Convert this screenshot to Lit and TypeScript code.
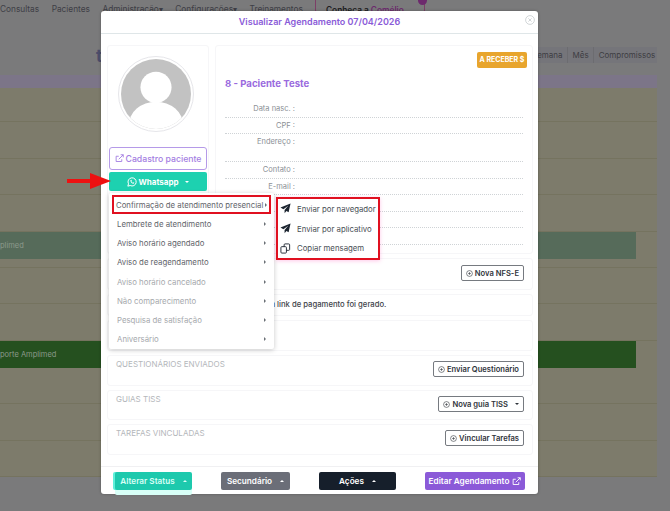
import { LitElement, html, css } from "lit";
import { customElement } from "lit/decorators.js";

const plus = html`<svg class="pi" viewBox="0 0 12 12"><circle cx="6" cy="6" r="5" fill="none" stroke="currentColor" stroke-width="1"/><path d="M6 3.6v4.8M3.6 6h4.8" stroke="currentColor" stroke-width="1"/></svg>`;
const plane = html`<svg class="mi" viewBox="0 0 12 12"><path d="M11.5.5 0.5 5l3.2 1.7 5.3-3.6-4 4.5v3.6l2-2.4 2.4 1.3z" fill="#1c2530"/></svg>`;
const copy = html`<svg class="mi" viewBox="0 0 12 12" fill="#fff" stroke="#1c2530" stroke-width="1"><rect x="4.5" y="1" width="6" height="7" rx="1"/><rect x="1" y="4" width="6" height="7" rx="1"/></svg>`;
const ext = html`<svg class="ei" viewBox="0 0 12 12" fill="none" stroke="currentColor" stroke-width="1.2"><path d="M9 7v3H1.5V3H5"/><path d="M5 7l6-6M7.5 1H11v3.5"/></svg>`;
const wa = html`<svg class="wa" viewBox="0 0 12 12" fill="none" stroke="#fff" stroke-width="1.2"><path d="M1 11l.8-2.8A4.9 4.9 0 1 1 3.8 10.2z"/><path d="M4 3.8c0 2.2 1.800 4 4 4.300l.8-1.200-1.400-.7-.6.600c-.7-.3-1.200-.8-1.500-1.500l.6-.6-.7-1.400z" fill="#fff" stroke="none"/></svg>`;

const MENU: [string, boolean][] = [
  ["Confirmação de atendimento presencial", false],
  ["Lembrete de atendimento", false],
  ["Aviso horário agendado", false],
  ["Aviso de reagendamento", false],
  ["Aviso horário cancelado", true],
  ["Não comparecimento", true],
  ["Pesquisa de satisfação", true],
  ["Aniversário", true],
];
const FIELDS: [string, string][] = [
  ["Data nasc. :", "r16"],
  ["CPF :", "r16"],
  ["Endereço :", "r28"],
  ["Contato :", "r16"],
  ["E-mail :", "r16"],
  ["", "r16"],
  ["", "r16"],
  ["", "r16"],
];

@customElement("app-root")
export class AppRoot extends LitElement {
  static styles = css`
    :host { display: block; width: 670px; height: 511px; position: relative; overflow: hidden; background: #7a7a7b; font-family: Inter, "Liberation Sans", sans-serif; color: #2a2f36; }
    * { box-sizing: border-box; }
    .nav { height: 18px; display: flex; gap: 12.500px; padding: 3.500px 0 0 0; font-size: 8.300px; color: #3e3e46; white-space: nowrap; position: relative; }
    .nav b { font-weight: 600; color: #1c1c20; border: 1px solid #7d3f67; border-radius: 10px; position: absolute; left: 315px; top: -10px; width: 110px; height: 30px; padding: 13.500px 0 0 10px; }
    .nav i { font-style: normal; color: #6d2a6d; }
    .nav u { position: absolute; left: 102px; top: 5px; width: 9px; height: 9px; border-radius: 50%; background: #6d2a6d; }
    .views { margin: 29px 13px 0 auto; height: 16px; width: 124px; display: flex; background: #75757a; font-size: 8px; color: #3d3d42; }
    .views span { padding: 3px 4.500px 0; border-right: 1px solid #6c6c70; white-space: nowrap; }
    .views span:first-child { padding-left: 0; margin-left: -1px; }
    .views span:last-child { border: 0; }
    .tablewrap { margin: 12px 13px 0 0; }
    .thead { height: 13px; background: #7c7588; }
    .row { background: #7d7b6b; border-bottom: 1px solid #75735f; height: 36.500px; }
    .row.f1 { height: 34px; }
    .row.s { height: 9px; }
    .bar { height: 27px; font-size: 7.500px; line-height: 27px; color: #8c9a8c; background: #7d7b6b; }
    .bar span { display: block; width: 636px; height: 100%; }
    .bar.l span { background: #566b5a; }
    .bar.d span { background: #25501f; }
    .overlaytext { position: absolute; left: 96px; top: 46px; font-size: 17px; font-weight: 700; color: #4d4d6a; }

    .modal { position: absolute; left: 101px; top: 11px; width: 437px; height: 483px; background: #fff; border-radius: 3px; display: flex; flex-direction: column; box-shadow: 0 0 3px rgba(0,0,0,.3); }
    .mh { height: 23px; border-bottom: 1px solid #dfe6e8; color: #8a5bd8; font-size: 9px; font-weight: 600; text-align: center; line-height: 22px; position: relative; flex: none; }
    .close { position: absolute; right: 3px; top: 4px; width: 10px; height: 10px; }
    .mb { flex: 1; padding: 11px 5px 0 6px; display: flex; flex-direction: column; gap: 4px; }
    .top { display: flex; gap: 6px; height: 209px; flex: none; }
    .lc { width: 102px; border: 1px solid #f6f6f8; border-radius: 3px; padding: 10px 2px 0 2px; display: flex; flex-direction: column; align-items: center; }
    .avatar { width: 76px; height: 76px; border-radius: 50%; border: 1px solid #e6e6ea; padding: 2px; flex: none; margin-right: 4px; }
    .btnp { margin-top: 15px; width: 98px; height: 23px; border: 1px solid #b59ae8; border-radius: 3px; color: #a37ee2; font-size: 8.700px; font-weight: 500; display: flex; align-items: center; justify-content: center; gap: 2px; white-space: nowrap; }
    .ei { width: 9px; height: 9px; flex: none; }
    .btnw { margin-top: 2px; width: 98px; height: 19px; background: #1dd1b0; border-radius: 2px; color: #fff; font-size: 8px; font-weight: 700; display: flex; align-items: center; justify-content: center; gap: 1px; white-space: nowrap; }
    .wa { width: 10px; height: 10px; }
    .caret { width: 0; height: 0; border-left: 2px solid transparent; border-right: 2px solid transparent; border-top: 2.500px solid currentColor; margin-left: 5px; flex: none; }
    .rc { flex: 1; border: 1px solid #f6f6f8; border-radius: 3px; padding: 0 9px 0 9px; position: relative; }
    .badge { position: absolute; right: 5px; top: 6px; width: 50px; height: 16px; background: #e8a52d; border-radius: 2px; color: #fff; font-size: 7px; font-weight: 700; text-align: center; line-height: 16px; white-space: nowrap; }
    .name { padding-top: 31px; height: 55px; color: #9a6ade; font-size: 9.600px; font-weight: 700; line-height: 14px; }
    .f { border-bottom: 1px dotted #cfd3d6; font-size: 7.500px; color: #8b9096; text-align: right; padding: 1px 228px 0 0; line-height: 14px; white-space: nowrap; }
    .f.r16 { height: 16.500px; }
    .f.r28 { height: 28px; }
    .card { border: 1px solid #f6f6f8; border-radius: 3px; position: relative; flex: none; display: flex; justify-content: flex-end; align-items: flex-start; padding: 5px 8px 0 0; }
    .c1 { height: 32px; padding-top: 6px; }
    .c2 { height: 22px; padding: 5px 0 0 136px; justify-content: flex-start; font-size: 7.700px; font-weight: 500; color: #3e434a; }
    .c3 { height: 31px; }
    .c4 { height: 30px; }
    .lab { position: absolute; left: 8px; top: 3px; font-size: 8px; color: #b4b7bb; white-space: nowrap; }
    .ob { height: 16px; border: 1px solid #767a80; border-radius: 2px; font-size: 7.600px; font-weight: 600; color: #2f343b; display: flex; align-items: center; padding: 0 4px 0 4px; gap: 2px; white-space: nowrap; background: #fff; }
    .pi { width: 7px; height: 7px; flex: none; }
    .ft { height: 28px; margin-top: auto; border-top: 1px solid #f0f0f2; display: flex; justify-content: space-between; padding: 5px 13px 0 14px; flex: none; }
    .fb { height: 18px; border-radius: 2px; color: #fff; font-size: 8.200px; font-weight: 600; display: flex; align-items: center; justify-content: center; white-space: nowrap; }
    .fb.a { width: 77px; background: #1dc9ad; color: #d8fff6; box-shadow: -2px 0 0 #5ff0da, 0 5px 0 #d8fff7; }
    .fb.b { width: 69px; background: #6b6e78; }
    .fb.c { width: 77px; background: #161f2b; }
    .fb.d { width: 100px; background: #8b5ad8; gap: 3px; }
    .fb .caret { border-top: 0; border-bottom: 2.500px solid currentColor; margin-left: 8px; }

    .menu { position: absolute; left: 109px; top: 193px; width: 165px; height: 156px; background: #fff; border-radius: 2px; box-shadow: 0 1px 5px rgba(0,0,0,.22); padding: 3px 0 0 0; z-index: 3; }
    .mi-row { height: 19.300px; display: flex; align-items: center; padding: 0 8px 0 8px; font-size: 7.800px; color: #5f646b; white-space: nowrap; justify-content: space-between; }
    .mi-row.dis { color: #a6a9ad; }
    .mi-row.first { outline: 2px solid #e01020; outline-offset: -2px; margin: -1px 3px 0; padding: 0 4px 0 4px; height: 19px; }
    .tri { width: 0; height: 0; border-top: 2px solid transparent; border-bottom: 2px solid transparent; border-left: 2.500px solid #6b7076; flex: none; }
    .sub { position: absolute; left: 276px; top: 197px; width: 104px; height: 63px; background: #fff; border: 2px solid #e01020; box-shadow: 0 1px 4px rgba(255,120,200,.4); padding: 0 0 0 2px; z-index: 4; display: flex; flex-direction: column; justify-content: center; }
    .sub div { height: 20.500px; display: flex; align-items: center; gap: 6px; font-size: 7.800px; color: #4a4f56; white-space: nowrap; }
    .mi { width: 11px; height: 11px; flex: none; }
    .arrow { position: absolute; left: 67px; top: 173px; width: 44px; height: 16px; z-index: 5; }
  `;
  render() {
    return html`
      <div class="nav"><span>Consultas</span><span>Pacientes</span><span>Administração▾</span><span>Configurações▾</span><span>Treinamentos</span><b>Conheça a <i>Comélio</i><u></u></b></div>
      <div class="views"><span>Semana</span><span>Mês</span><span>Compromissos</span></div>
      <div class="overlaytext">t</div>
      <div class="tablewrap">
        <div class="thead"></div>
        <div class="row f1"></div><div class="row"></div><div class="row"></div><div class="row"></div>
        <div class="bar l"><span>plimed</span></div>
        <div class="row s"></div><div class="row"></div><div class="row"></div>
        <div class="bar d"><span>porte Amplimed</span></div>
        <div class="row"></div><div class="row"></div><div class="row"></div>
      </div>

      <div class="modal">
        <div class="mh">Visualizar Agendamento 07/04/2026
          <svg class="close" viewBox="0 0 10 10" fill="none" stroke="#c6cbce" stroke-width=".8"><circle cx="5" cy="5" r="4.400"/><path d="M3.400 3.400l3.200 3.200M6.600 3.400l-3.200 3.200"/></svg>
        </div>
        <div class="mb">
          <div class="top">
            <div class="lc">
              <div class="avatar">
                <svg viewBox="0 0 72 72" width="70" height="70">
                  <defs><clipPath id="c"><circle cx="36" cy="36" r="36"/></clipPath></defs>
                  <circle cx="36" cy="36" r="36" fill="#c2c2c2"/>
                  <g clip-path="url(#c)" fill="#fff"><circle cx="36" cy="29" r="16"/><ellipse cx="36" cy="68" rx="28" ry="24"/></g>
                </svg>
              </div>
              <div class="btnp">${ext}Cadastro paciente</div>
              <div class="btnw">${wa}Whatsapp<span class="caret"></span></div>
            </div>
            <div class="rc">
              <div class="badge">A RECEBER $</div>
              <div class="name">8 - Paciente Teste</div>
              ${FIELDS.map(([l, c]) => html`<div class="f ${c}">${l}</div>`)}
            </div>
          </div>
          <div class="card c1"><div class="ob">${plus}Nova NFS-E</div></div>
          <div class="card c2">Nenhum link de pagamento foi gerado.</div>
          <div class="card c3"></div>
          <div class="card c3"><span class="lab">QUESTIONÁRIOS ENVIADOS</span><div class="ob">${plus}Enviar Questionário</div></div>
          <div class="card c4"><span class="lab">GUIAS TISS</span><div class="ob">${plus}Nova guia TISS<span class="caret"></span></div></div>
          <div class="card c3"><span class="lab">TAREFAS VINCULADAS</span><div class="ob">${plus}Vincular Tarefas</div></div>
        </div>
        <div class="ft">
          <div class="fb a">Alterar Status<span class="caret"></span></div>
          <div class="fb b">Secundário<span class="caret"></span></div>
          <div class="fb c">Ações<span class="caret"></span></div>
          <div class="fb d">Editar Agendamento ${ext}</div>
        </div>
      </div>

      <div class="menu">
        ${MENU.map(([t, d], i) => html`<div class="mi-row ${d ? "dis" : ""} ${i === 0 ? "first" : ""}"><span>${t}</span><span class="tri"></span></div>`)}
      </div>
      <div class="sub">
        <div>${plane}Enviar por navegador</div>
        <div>${plane}Enviar por aplicativo</div>
        <div>${copy}Copiar mensagem</div>
      </div>
      <svg class="arrow" viewBox="0 0 44 16"><path d="M0 6h23V0l21 8-21 8v-6H0z" fill="#ee1111"/></svg>
    `;
  }
}
